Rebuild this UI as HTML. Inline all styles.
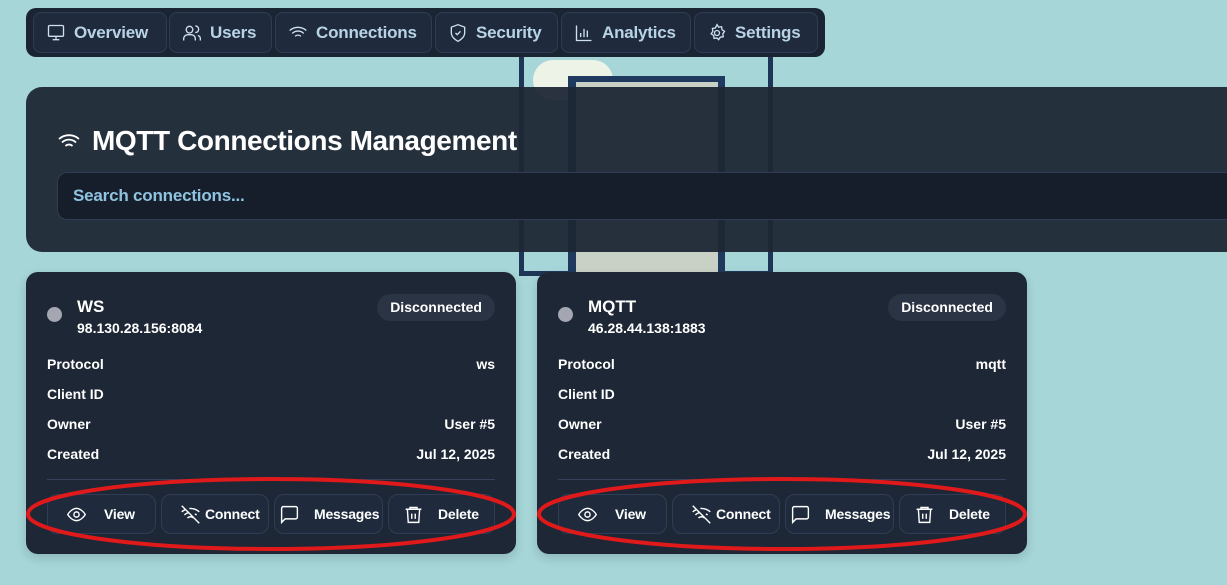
<!DOCTYPE html>
<html><head><meta charset="utf-8"><style>
*{box-sizing:border-box;margin:0;padding:0}
body{width:1227px;height:585px;overflow:hidden;background:#a6d6d8;font-family:"Liberation Sans",sans-serif;position:relative}
.abs{position:absolute}
.nav{left:26px;top:8px;width:799px;height:49px;background:#1b2433;border-radius:10px}
.tab{position:absolute;top:4px;height:41px;background:#1f2b3d;border:1px solid #2e3d55;border-radius:8px;color:#b9d3e6;font-weight:bold;font-size:17px;display:flex;align-items:center;gap:8px;padding-left:12px;letter-spacing:-0.2px}
.tab svg{width:20px;height:20px;stroke:#cfe0ee;fill:none;stroke-width:1.6;flex:none}
.panel{left:26px;top:87px;width:1220px;height:165px;background:rgba(30,39,53,.95);border-radius:16px}
.card{top:272px;width:490px;height:282px;background:#1e2735;border-radius:12px;color:#fff;box-shadow:0 4px 10px rgba(0,0,0,.15)}
.row{position:absolute;left:21px;right:21px;font-size:14px;font-weight:bold;display:flex;justify-content:space-between}
.btn{position:absolute;top:222px;height:40px;border:1px solid #2e3d55;background:#1f2b3d;border-radius:10px;color:#fff;font-weight:bold;font-size:14px}
.btn svg{position:absolute;left:18px;top:9px;width:21px;height:21px;stroke:#fff;fill:none;stroke-width:1.6}
.btn span{position:absolute;top:11px;letter-spacing:-0.2px}
</style></head><body>
<!-- background illustration -->
<div class="abs" style="left:519px;top:50px;width:254px;height:226px;border:5px solid #1d3658;border-top:none"></div>
<div class="abs" style="left:533px;top:60px;width:80px;height:40px;background:#eef3e8;border-radius:30px"></div>
<div class="abs" style="left:568px;top:76px;width:157px;height:200px;background:#1f3a5e"></div>
<div class="abs" style="left:576px;top:82px;width:142px;height:190px;background:#c9d0c6"></div>

<div class="abs nav">
 <div class="tab" style="left:7px;width:134px"><svg viewBox="0 0 24 24"><rect x="3" y="3" width="18" height="13" rx="1.5"/><path d="M12 16v4M8 20h8"/></svg>Overview</div>
 <div class="tab" style="left:143px;width:103px"><svg viewBox="0 0 24 24"><circle cx="9" cy="8" r="4"/><path d="M2 21v-2a5 5 0 0 1 5-5h4a5 5 0 0 1 5 5v2M16 3.5a4 4 0 0 1 0 8M22 21v-2a4 4 0 0 0-3-4"/></svg>Users</div>
 <div class="tab" style="left:249px;width:157px"><svg viewBox="0 0 24 24"><path d="M2 9a15 15 0 0 1 20 0M5 12.5a10 10 0 0 1 14 0M8.5 16a5 5 0 0 1 7 0M12 20h.01"/></svg>Connections</div>
 <div class="tab" style="left:409px;width:123px"><svg viewBox="0 0 24 24"><path d="M12 22s8-4 8-10V5l-8-3-8 3v7c0 6 8 10 8 10z"/><path d="M9 12l2 2 4-4"/></svg>Security</div>
 <div class="tab" style="left:535px;width:130px"><svg viewBox="0 0 24 24"><path d="M3 3v18h18M8 17v-5M12 17V7M16 17v-8"/></svg>Analytics</div>
 <div class="tab" style="left:668px;width:124px"><svg viewBox="0 0 24 24"><circle cx="12" cy="12" r="3"/><path d="M12 2l2 3 3.5-.5.5 3.5 3 2-2 3 .5 3.5-3.5.5-2 3-2-2-3.5.5-.5-3.5-3-2 2-3-.5-3.5 3.5-.5z"/></svg>Settings</div>
</div>

<div class="abs panel">
 <svg class="abs" style="left:31px;top:43px" width="24" height="24" viewBox="0 0 24 24" fill="none" stroke="#fff" stroke-width="1.8"><path d="M2 9a15 15 0 0 1 20 0M5 12.5a10 10 0 0 1 14 0M8.5 16a5 5 0 0 1 7 0M12 20h.01"/></svg>
 <div class="abs" style="left:66px;top:38px;color:#fff;font-weight:bold;font-size:28px;letter-spacing:-0.4px">MQTT Connections Management</div>
 <div class="abs" style="left:31px;top:85px;width:1200px;height:48px;background:#171e2b;border:1px solid #2e3d55;border-radius:10px;color:#8fc3e0;font-weight:bold;font-size:17px;padding:13px 15px;letter-spacing:-0.2px">Search connections...</div>
</div>

<div class="abs card" style="left:26px">
 <div class="abs" style="left:21px;top:35px;width:15px;height:15px;border-radius:50%;background:#a4a7b2"></div>
 <div class="abs" style="left:51px;top:25px;font-size:17px;font-weight:bold">WS</div>
 <div class="abs" style="left:51px;top:48px;font-size:14px;font-weight:bold">98.130.28.156:8084</div>
 <div class="abs" style="right:21px;top:22px;height:27px;padding:0 13px;border-radius:14px;background:#2a3444;font-size:14px;font-weight:bold;line-height:27px">Disconnected</div>
 <div class="row" style="top:84px"><span>Protocol</span><span>ws</span></div>
 <div class="row" style="top:114px"><span>Client ID</span><span></span></div>
 <div class="row" style="top:144px"><span>Owner</span><span>User #5</span></div>
 <div class="row" style="top:174px"><span>Created</span><span>Jul 12, 2025</span></div>
 <div class="abs" style="left:21px;right:21px;top:207px;height:1px;background:#35425a"></div>
 <div class="btn" style="left:21px;width:109px"><svg viewBox="0 0 24 24"><path d="M2 12s4-7 10-7 10 7 10 7-4 7-10 7S2 12 2 12z"/><circle cx="12" cy="12" r="3"/></svg><span style="left:56px">View</span></div>
 <div class="btn" style="left:135px;width:108px"><svg viewBox="0 0 24 24"><path d="M2 2l20 20M8.5 16a5 5 0 0 1 7 0M5 12.5a10 10 0 0 1 5-2.7M2 9a15 15 0 0 1 4.5-2.8M10.7 5.1A15 15 0 0 1 22 9M17 11.5a10 10 0 0 1 2 1M12 20h.01"/></svg><span style="left:43px">Connect</span></div>
 <div class="btn" style="left:248px;width:109px"><svg viewBox="0 0 24 24" style="left:4px"><path d="M21 15a2 2 0 0 1-2 2H7l-4 4V5a2 2 0 0 1 2-2h14a2 2 0 0 1 2 2z"/></svg><span style="left:39px">Messages</span></div>
 <div class="btn" style="left:362px;width:107px"><svg viewBox="0 0 24 24" style="left:14px"><path d="M3 6h18M8 6V4h8v2M5 6l1 15h12l1-15M10 11v6M14 11v6"/></svg><span style="left:49px">Delete</span></div>
</div>

<div class="abs card" style="left:537px">
 <div class="abs" style="left:21px;top:35px;width:15px;height:15px;border-radius:50%;background:#a4a7b2"></div>
 <div class="abs" style="left:51px;top:25px;font-size:17px;font-weight:bold">MQTT</div>
 <div class="abs" style="left:51px;top:48px;font-size:14px;font-weight:bold">46.28.44.138:1883</div>
 <div class="abs" style="right:21px;top:22px;height:27px;padding:0 13px;border-radius:14px;background:#2a3444;font-size:14px;font-weight:bold;line-height:27px">Disconnected</div>
 <div class="row" style="top:84px"><span>Protocol</span><span>mqtt</span></div>
 <div class="row" style="top:114px"><span>Client ID</span><span></span></div>
 <div class="row" style="top:144px"><span>Owner</span><span>User #5</span></div>
 <div class="row" style="top:174px"><span>Created</span><span>Jul 12, 2025</span></div>
 <div class="abs" style="left:21px;right:21px;top:207px;height:1px;background:#35425a"></div>
 <div class="btn" style="left:21px;width:109px"><svg viewBox="0 0 24 24"><path d="M2 12s4-7 10-7 10 7 10 7-4 7-10 7S2 12 2 12z"/><circle cx="12" cy="12" r="3"/></svg><span style="left:56px">View</span></div>
 <div class="btn" style="left:135px;width:108px"><svg viewBox="0 0 24 24"><path d="M2 2l20 20M8.5 16a5 5 0 0 1 7 0M5 12.5a10 10 0 0 1 5-2.7M2 9a15 15 0 0 1 4.5-2.8M10.7 5.1A15 15 0 0 1 22 9M17 11.5a10 10 0 0 1 2 1M12 20h.01"/></svg><span style="left:43px">Connect</span></div>
 <div class="btn" style="left:248px;width:109px"><svg viewBox="0 0 24 24" style="left:4px"><path d="M21 15a2 2 0 0 1-2 2H7l-4 4V5a2 2 0 0 1 2-2h14a2 2 0 0 1 2 2z"/></svg><span style="left:39px">Messages</span></div>
 <div class="btn" style="left:362px;width:107px"><svg viewBox="0 0 24 24" style="left:14px"><path d="M3 6h18M8 6V4h8v2M5 6l1 15h12l1-15M10 11v6M14 11v6"/></svg><span style="left:49px">Delete</span></div>
</div>

<svg class="abs" style="left:0;top:0" width="1227" height="585">
 <ellipse cx="271" cy="514" rx="243" ry="35" fill="none" stroke="#e0191b" stroke-width="4"/>
 <ellipse cx="782" cy="514" rx="243" ry="35" fill="none" stroke="#e0191b" stroke-width="4"/>
</svg>
</body></html>
